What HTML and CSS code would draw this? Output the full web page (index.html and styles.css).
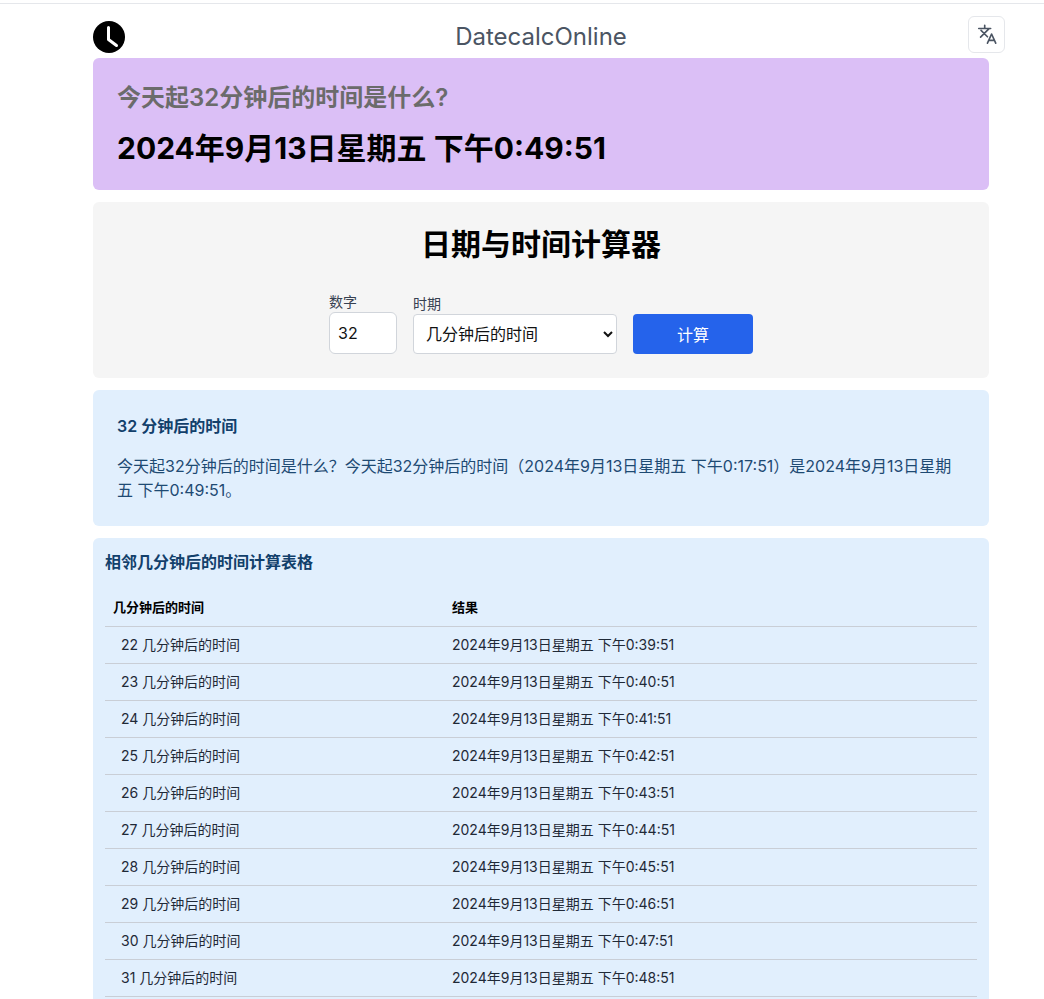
FILE: index.html
```html
<!DOCTYPE html>
<html lang="zh">
<head>
<meta charset="utf-8">
<title>DatecalcOnline</title>
<link rel="stylesheet" href="styles.css">
</head>
<body>
<div class="topline"></div>
<div class="page">
  <header class="header">
    <svg class="logo" viewBox="0 0 32 32" width="32" height="32"><circle cx="16" cy="16" r="16" fill="#000"/><path d="M15.500 6.500V18.500L23.500 24.500" fill="none" stroke="#fff" stroke-width="3" stroke-linecap="round" stroke-linejoin="round"/></svg>
    <div class="brand">DatecalcOnline</div>
    <button class="lang" aria-label="language">
      <svg viewBox="0 0 24 24" width="22" height="22" fill="none" stroke="#4b5563" stroke-width="1.8" stroke-linecap="round" stroke-linejoin="round"><path d="M3 6h13M9.500 2.500V6M14 6.500L5 15.500M5.500 8l7 7"/><path d="M12.500 22l4.500-10 4.500 10M14 19h6"/></svg>
    </button>
  </header>
  <section class="card hero">
    <h2 class="hero-q">今天起32分钟后的时间是什么?</h2>
    <p class="hero-a">2024年9月13日星期五 下午0:49:51</p>
  </section>
  <section class="card calc">
    <h1 class="calc-title">日期与时间计算器</h1>
    <form class="form">
      <label class="field"><span class="label">数字</span><input class="num" value="32"></label>
      <label class="field field-low"><span class="label">时期</span>
        <select class="sel"><option>几分钟后的时间</option></select></label>
      <button type="button" class="go">计算</button>
    </form>
  </section>
  <section class="card info">
    <h3 class="info-title">32 分钟后的时间</h3>
    <p class="info-text">今天起32分钟后的时间是什么？今天起32分钟后的时间（2024年9月13日星期五 下午0:17:51）是2024年9月13日星期五 下午0:49:51。</p>
  </section>
  <section class="card tablecard">
    <h3 class="table-title">相邻几分钟后的时间计算表格</h3>
    <table class="table">
      <thead><tr><th class="c1">几分钟后的时间</th><th>结果</th></tr></thead>
      <tbody>
        <tr><td class="c1">22 几分钟后的时间</td><td>2024年9月13日星期五 下午0:39:51</td></tr>
        <tr><td class="c1">23 几分钟后的时间</td><td>2024年9月13日星期五 下午0:40:51</td></tr>
        <tr><td class="c1">24 几分钟后的时间</td><td>2024年9月13日星期五 下午0:41:51</td></tr>
        <tr><td class="c1">25 几分钟后的时间</td><td>2024年9月13日星期五 下午0:42:51</td></tr>
        <tr><td class="c1">26 几分钟后的时间</td><td>2024年9月13日星期五 下午0:43:51</td></tr>
        <tr><td class="c1">27 几分钟后的时间</td><td>2024年9月13日星期五 下午0:44:51</td></tr>
        <tr><td class="c1">28 几分钟后的时间</td><td>2024年9月13日星期五 下午0:45:51</td></tr>
        <tr><td class="c1">29 几分钟后的时间</td><td>2024年9月13日星期五 下午0:46:51</td></tr>
        <tr><td class="c1">30 几分钟后的时间</td><td>2024年9月13日星期五 下午0:47:51</td></tr>
        <tr><td class="c1">31 几分钟后的时间</td><td>2024年9月13日星期五 下午0:48:51</td></tr>
      </tbody>
    </table>
  </section>
</div>
</body>
</html>
```
FILE: styles.css
```css
* { box-sizing: border-box; }
html, body { margin: 0; padding: 0; background: #fff; overflow-x: hidden; }
body { font-family: Inter, "Noto Sans CJK SC", sans-serif; color: #000; }
.topline { height: 4px; border-bottom: 1px solid #e5e7eb; }
.page { width: 896px; margin-left: 93px; }
.header { display: grid; grid-template-columns: 1fr auto 1fr; align-items: center; height: 54px; padding-top: 14px; padding-bottom: 2px; }
.logo { display: block; }
.brand { font-size: 24px; line-height: 32px; color: #4b5563; }
.lang { justify-self: end; margin-right: -16px; width: 37px; height: 37px; display: flex; align-items: center; justify-content: center; padding: 0; background: #fff; border: 1px solid #e5e7eb; border-radius: 6px; transform: translateY(-3px); }
.card { border-radius: 6px; margin-bottom: 12px; }
.hero { background: #dbbff6; height: 132px; padding: 24px; }
.hero-q { margin: 0; font-size: 24px; line-height: 32px; font-weight: 600; color: #6b6b6b; }
.hero-a { margin: 14px 0 0; font-size: 30px; line-height: 40px; font-weight: 700; }
.calc { background: #f5f5f5; height: 176px; padding-top: 24px; }
.calc-title { margin: 0; text-align: center; font-size: 30px; line-height: 36px; font-weight: 700; }
.form { display: flex; justify-content: center; align-items: flex-end; margin-top: 32px; gap: 16px; }
.field { display: flex; flex-direction: column; }
.label { font-size: 14px; line-height: 16px; color: #374151; margin-bottom: 2px; }
.num { width: 68px; height: 42px; padding: 0 8px; border: 1px solid #d1d5db; border-radius: 6px; background: #fff; font: 16px Inter, sans-serif; color: #111; outline: none; }
.field-low { height: 58px; }
.sel { width: 204px; height: 40px; padding: 0 8px; border: 1px solid #d1d5db; border-radius: 4px; background: #fff; font: 16px Inter, "Noto Sans CJK SC", sans-serif; color: #111; }
.go { width: 120px; height: 40px; border: 0; border-radius: 4px; background: #2563eb; color: #fff; font: 16px Inter, "Noto Sans CJK SC", sans-serif; }
.info { background: #e1effd; height: 136px; padding: 24px; color: #1e4a73; }
.info-title { margin: 0; font-size: 16px; line-height: 24px; font-weight: 600; color: #12406b; }
.info-text { margin: 16px 0 0; font-size: 16px; line-height: 24px; }
.tablecard { background: #e1effd; padding: 12px; margin-bottom: 0; }
.table-title { margin: 0 0 12px; font-size: 16px; line-height: 24px; font-weight: 600; color: #12406b; }
.table { width: 872px; border-collapse: collapse; table-layout: fixed; font-size: 14px; }
.table th { height: 40px; padding: 2px 8px 0; text-align: left; font-size: 13px; font-weight: 600; border-bottom: 1px solid #c9ced6; }
.table td { height: 37px; padding: 0 8px 2px; color: #1f2937; border-bottom: 1px solid #c9ced6; }
.table .c1 { width: 339px; }
.table td.c1 { padding-left: 16px; }
```
